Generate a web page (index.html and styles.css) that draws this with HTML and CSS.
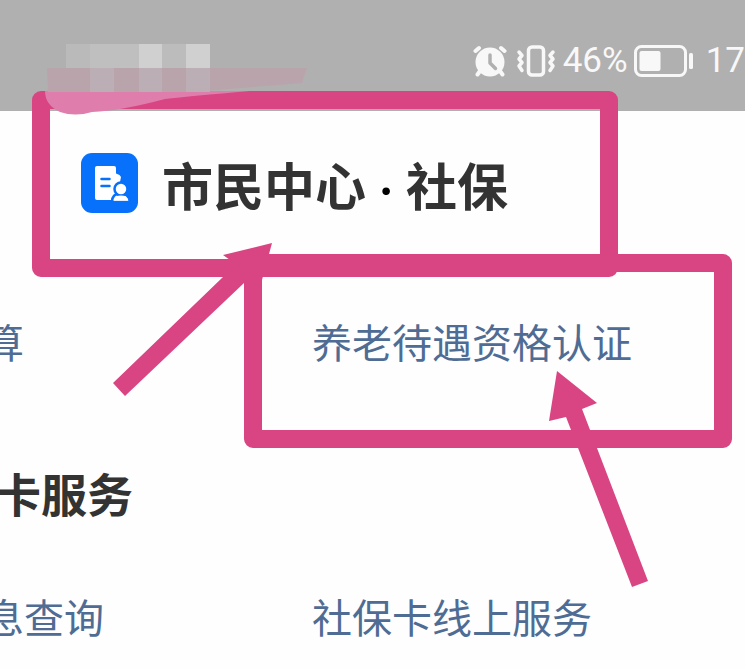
FILE: index.html
```html
<!DOCTYPE html>
<html lang="zh-CN">
  <head>
    <meta charset="UTF-8" />
    <meta name="viewport" content="width=device-width, initial-scale=1.0" />
    <title>市民中心 · 社保</title>
    <link rel="stylesheet" href="styles.css">
  </head>
  <body>
    <header class="status-bar">
      <svg class="icon-alarm" viewBox="0 0 34 32" width="34" height="32" aria-hidden="true">
        <g fill="none" stroke="#f8f8f8" stroke-width="4" stroke-linecap="round">
          <path d="M2.500 6L6 3M28 3L31.500 6" />
          <path d="M7 26L4.500 29.500M27 26L29.500 29.500" />
        </g>
        <circle cx="17" cy="17" r="14.500" fill="#f8f8f8" />
        <path d="M17 10v8l5.500 5.500" fill="none" stroke="#b0b0b0" stroke-width="3.500" stroke-linecap="round" stroke-linejoin="round" />
      </svg>
      <svg class="icon-vibrate" viewBox="0 0 40 32" width="40" height="32" aria-hidden="true">
        <g fill="none" stroke="#f8f8f8" stroke-width="3.500" stroke-linejoin="round" stroke-linecap="round">
          <rect x="12.500" y="2" width="15" height="28" rx="3.500" />
          <path d="M3 7l3 3.500-3 3.500 3 3.500-3 3.500 3 4.500" />
          <path d="M37 7l-3 3.500 3 3.500-3 3.500 3 3.500-3 4.500" />
        </g>
      </svg>
      <span class="battery-level">46%</span>
      <svg class="icon-battery" viewBox="0 0 60 32" width="60" height="32" aria-hidden="true">
        <rect x="1.500" y="1.500" width="50" height="29" rx="6" fill="none" stroke="#f8f8f8" stroke-width="3" />
        <rect x="5.500" y="6" width="21" height="20" rx="2" fill="#f8f8f8" />
        <rect x="55" y="8" width="4" height="16" rx="1.500" fill="#f8f8f8" />
      </svg>
      <span class="clock">17</span>
    </header>

    <main class="services">
      <div class="page-title">
        <svg class="logo" viewBox="0 0 57 60" width="57" height="60" aria-hidden="true">
          <rect width="57" height="60" rx="11" fill="#0771fb" />
          <path d="M16 13h17q2 0 2 2v5.500l3.500 1.500 1.500 2-1 5-5 9v9H16q-2 0-2-2V15q0-2 2-2z" fill="#fff" />
          <path d="M20.500 26h8M20.500 33h8" stroke="#0771fb" stroke-width="2.500" stroke-linecap="round" />
          <g fill="#fff" stroke="#0771fb" stroke-width="2.500">
            <path d="M31 49q0-8.500 8.500-8.500 8.500 0 9 8.500z" />
            <circle cx="40" cy="36" r="6.500" />
          </g>
          <path d="M33 47.500q1-5 7-5 6 0 7.500 5z" fill="#fff" />
        </svg>
        <h1>市民中心<span class="dot">·</span>社保</h1>
      </div>

      <nav class="links">
        <a href="#">算</a>
        <a href="#">养老待遇资格认证</a>
      </nav>

      <h2>卡服务</h2>

      <nav class="links">
        <a href="#">息查询</a>
        <a href="#">社保卡线上服务</a>
      </nav>
    </main>

    <!-- hand-drawn marks over the page -->
    <svg class="marks" viewBox="0 0 745 669" width="745" height="669" aria-hidden="true">
      <g fill="none" stroke="#d94583" stroke-width="18" stroke-linejoin="round">
        <rect x="41" y="100" width="568" height="168" />
        <rect x="253" y="263" width="470" height="176" />
      </g>
      <g fill="#d94583">
        <path d="M113 383L223 277L237 265L223 255L272 243L262 280L244 283L125 396z" />
        <path d="M557 371L597 403L582 409L648 581L632 587L566 417L549 421z" />
      </g>
      <path d="M45 91H250Q190 96 165 99Q120 111 92 112Q75 117 60 112Q45 105 45 91z" fill="#df7dac" />
      <!-- mosaic strip -->
      <path d="M47 68H307L302 83Q240 88 190 92H48z" fill="#b9a4ac" />
      <rect x="90" y="68" width="24" height="24" fill="#bcaeb5" />
      <rect x="139" y="68" width="23" height="24" fill="#bcaeb5" />
      <rect x="186" y="68" width="24" height="24" fill="#bcaeb5" />
      <rect x="66" y="44" width="24" height="24" fill="#bababa" />
      <rect x="90" y="44" width="49" height="24" fill="#bfbfbf" />
      <rect x="139" y="44" width="23" height="24" fill="#d0d0d0" />
      <rect x="162" y="44" width="24" height="24" fill="#bcbcbc" />
      <rect x="186" y="44" width="24" height="24" fill="#d0d0d0" />
    </svg>
  </body>
</html>
```

FILE: styles.css
```css
* {
  box-sizing: border-box;
}

body {
  position: relative;
  margin: 0;
  min-height: 100vh;
  overflow: hidden;
  background: #fefefe;
  font-family: "Noto Sans CJK SC", sans-serif;
}

.status-bar {
  display: flex;
  align-items: center;
  justify-content: flex-end;
  height: 111px;
  padding: 10px 0 0;
  background: #b0b0b0;
  color: #f8f8f8;
  font-family: Roboto, sans-serif;
  font-size: 35px;
  line-height: 42px;
}

.icon-vibrate {
  margin-left: 9px;
}

.battery-level {
  margin-left: 7px;
}

.icon-battery {
  margin-left: 6px;
}

.clock {
  margin-left: 12px;
}

.services {
  padding-top: 42px;
}

.page-title {
  display: flex;
  align-items: flex-start;
  gap: 24px;
  padding-left: 81px;
}

h1,
h2 {
  margin: 0;
  color: #333;
  font-weight: 700;
  white-space: nowrap;
}

h1 {
  font-size: 51px;
  line-height: 62px;
}

.dot {
  display: inline-block;
  width: 40px;
  color: #000;
  font-family: Lato, sans-serif;
  font-weight: 400;
  text-align: center;
}

h2 {
  margin: 91px 0 64px -5px;
  font-size: 46px;
  line-height: 60px;
}

/* the left column runs off the edge of the screen */
.links {
  display: grid;
  grid-template-columns: 328px 1fr;
  margin-left: -16px;
}

.page-title + .links {
  margin-top: 93px;
}

.links a {
  color: #4f6c94;
  font-size: 40px;
  line-height: 60px;
  text-decoration: none;
  white-space: nowrap;
}

.marks {
  position: absolute;
  top: 0;
  left: 0;
  pointer-events: none;
}
```
